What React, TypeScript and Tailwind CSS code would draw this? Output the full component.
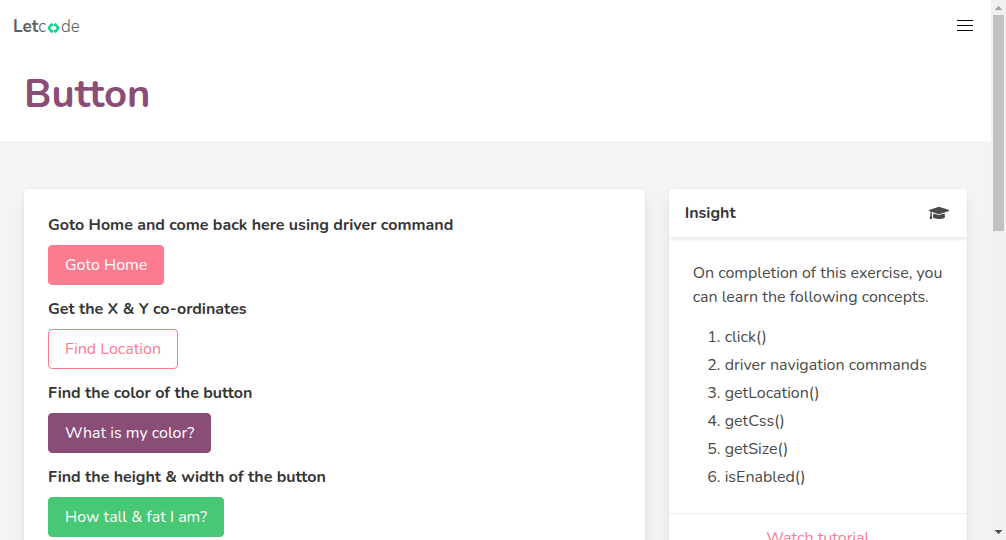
import { FaGraduationCap } from "react-icons/fa";

const exercises = [
  { id: "home", title: "Goto Home and come back here using driver command", label: "Goto Home", style: "border-[#fb7c91] bg-[#fb7c91] text-white" },
  { id: "position", title: "Get the X & Y co-ordinates", label: "Find Location", style: "border-[#fb7c91] bg-white text-[#fb7c91]" },
  { id: "color", title: "Find the color of the button", label: "What is my color?", style: "border-[#8a4d76] bg-[#8a4d76] text-white" },
  { id: "property", title: "Find the height & width of the button", label: "How tall & fat I am?", style: "border-[#48c774] bg-[#48c774] text-white" },
];

const concepts = ["click()", "driver navigation commands", "getLocation()", "getCss()", "getSize()", "isEnabled()"];

function Logo() {
  return (
    <a href="/" aria-label="Letcode" className="flex items-center pt-0.5 pl-[13px] text-[17px] leading-6 text-[#5c5f61]">
      <span className="font-bold">Let</span>
      <span className="font-light">c</span>
      <svg viewBox="0 0 26 20" className="mx-px mt-0.5 h-[10px] w-[13px]" fill="none" stroke="#0fd68a" strokeWidth="5" strokeLinecap="round" strokeLinejoin="round" aria-hidden="true">
        <path d="M8.500 3.500L3.500 10L8.500 16.500" />
        <path d="M17.500 3.500L22.500 10L17.500 16.500" />
        <path d="M12 1H8V6H12ZM12 14H8V19H12ZM14 1H18V6H14ZM14 14H18V19H14Z" fill="#0fd68a" stroke="none" />
      </svg>
      <span className="font-light">de</span>
    </a>
  );
}

function Scrollbar() {
  return (
    <div aria-hidden="true" className="flex w-[15px] shrink-0 flex-col items-center bg-[#f1f1f1]">
      <svg viewBox="0 0 15 15" className="h-[15px] w-[15px]" shapeRendering="crispEdges">
        <path d="M4 10L7.500 6L11 10Z" fill="#a3a3a3" />
      </svg>
      <div className="h-[216px] w-[11px] bg-[#c1c1c1]" />
      <svg viewBox="0 0 15 15" className="mt-auto h-[15px] w-[15px]" shapeRendering="crispEdges">
        <path d="M4 5L7.500 9L11 5Z" fill="#505050" />
      </svg>
    </div>
  );
}

const card = "rounded bg-white shadow-[0_8px_16px_-2px_rgba(10,10,10,0.1),0_0_0_1px_rgba(10,10,10,0.02)]";

export default function App() {
  return (
    <div className="flex h-screen overflow-hidden bg-[#f4f4f4] font-['Nunito','Lato',sans-serif] text-base leading-6 text-[#4a4a4a]">
      <div className="min-w-0 flex-1 overflow-hidden">
        <header className="bg-white">
          <nav className="flex h-[52px] items-stretch justify-between">
            <Logo />
            <button type="button" aria-label="menu" className="flex w-[52px] flex-col items-center justify-center gap-1 pb-px">
              <span className="h-px w-4 bg-[#0a0a0a]" />
              <span className="h-px w-4 bg-[#0a0a0a]" />
              <span className="h-px w-4 bg-[#0a0a0a]" />
            </button>
          </nav>
          <div className="px-6 pt-5 pb-6">
            <h1 className="text-[40px] leading-[45px] font-bold text-[#8a4d76]">Button</h1>
          </div>
        </header>
        <main className="grid grid-cols-3 items-start gap-6 px-6 py-12">
          <section className={`col-span-2 flex flex-col gap-3 p-6 ${card}`}>
            {exercises.map((item) => (
              <div key={item.id} className="flex flex-col items-start gap-2">
                <label htmlFor={item.id} className="font-bold text-[#363636]">{item.title}</label>
                <button id={item.id} type="button" className={`h-10 rounded border px-4 ${item.style}`}>{item.label}</button>
              </div>
            ))}
          </section>
          <aside className={`overflow-hidden ${card}`}>
            <header className="flex items-center justify-between px-4 py-3 shadow-[0_2px_4px_rgba(10,10,10,0.1)]">
              <h2 className="font-bold text-[#363636]">Insight</h2>
              <FaGraduationCap className="mr-0.5 h-4 w-5" aria-hidden="true" />
            </header>
            <div className="p-6">
              <p>On completion of this exercise, you can learn the following concepts.</p>
              <ol className="mt-4 ml-8 flex list-decimal flex-col gap-1">
                {concepts.map((name) => (
                  <li key={name}>{name}</li>
                ))}
              </ol>
            </div>
            <footer className="border-t border-[#ededed] p-3 text-center">
              <a href="#tutorial" className="text-[#fb7c91]">Watch tutorial</a>
            </footer>
          </aside>
        </main>
      </div>
      <Scrollbar />
    </div>
  );
}
